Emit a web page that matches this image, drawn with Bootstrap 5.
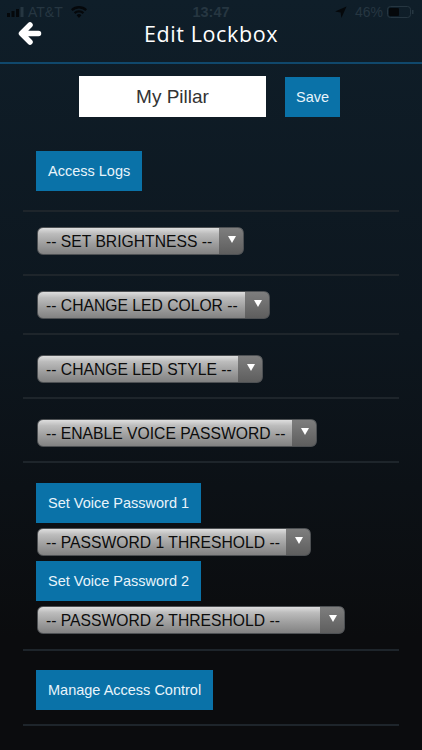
<!DOCTYPE html>
<html lang="en">
<head>
  <meta charset="UTF-8">
  <title>Edit Lockbox</title>
  <link href="https://cdn.jsdelivr.net/npm/bootstrap@5.3.2/dist/css/bootstrap.min.css" rel="stylesheet">
  <style>
    html, body { height: 750px; overflow: hidden; }
    body {
      background: linear-gradient(180deg, #0f1e29 0%, #0d161e 45%, #0b0c0e 85%, #0b0c0e 100%);
      font-family: "Liberation Sans", Arial, sans-serif;
    }
    .status-strip { height: 24px; padding: 0 8px 0 7px; color: #263641; font-size: 14px; line-height: 24px; }
    .status-clock { left: 0; right: 0; top: 0; font-weight: 700; font-size: 14.5px; }
    .title-strip { height: 38px; }
    .title-text { color: #fff; font-family: "Open Sans", sans-serif; font-size: 21.5px; letter-spacing: .6px; line-height: 20px; margin: 0; font-weight: 400; }
    .back-arrow { left: 18px; top: -3px; }
    .title-rule { height: 2px; background: #10486c; }
    .name-row { padding: 12px 0 0 79px; gap: 19px; height: 53px; }
    .name-input {
      width: 187px; height: 41px; border: 0; border-radius: 0; background: #fff; color: #333;
      text-align: center; font-size: 19px; padding: 1px 0 0;
    }
    .blue-btn {
      background: #0a72a8; color: #e8f4fb; border: 0; border-radius: 0; font-size: 14.5px;
      height: 40px; padding: 2px 12px 0; display: block;
    }
    .save-btn { margin-top: 1px; width: 55px; padding: 2px 0 0; }
    .panel-body { padding: 34px 23px 0 23px; }
    .rule-line { height: 2px; background: #1e252b; }
    .sect { padding: 20px 0 14px 13px; }
    .sect-access { padding: 0 0 19px 13px; }
    .sect-bright { padding: 15px 0 19px 13px; }
    .sect-color { padding: 15px 0 14px 13px; }
    .sect-voice { gap: 5px; padding-bottom: 15px; }
    .sect-last { padding-top: 19px; }
    .pick {
      display: block; height: 28px; border-radius: 6px; border: 1px solid #4d5053; padding: 1px 24px 0 8px;
      margin-left: 1px; color: #0c0c0c; font-size: 15.7px; line-height: 26px; appearance: none; -webkit-appearance: none;
      background:
        linear-gradient(180deg, #7e7e7e 0%, #5e5e5e 100%) right top / 24px 100% no-repeat,
        linear-gradient(180deg, #dedede 0%, #bcbcbc 22%, #9e9e9e 60%, #828282 100%);
    }
    .pick-arrow { position: absolute; top: 9px; right: 8px; width: 0; height: 0; border: 4px solid transparent; border-top: 7px solid #fff; border-bottom: 0; }
    .pick-wrap { width: max-content; }
    .w-bright { width: 207px; }
    .w-color { width: 233px; }
    .w-style { width: 226px; }
    .w-voice { width: 280px; }
    .w-pw1 { width: 274px; }
    .w-pw2 { width: 308px; }
  </style>
</head>
<body>
  <div class="status-strip d-flex justify-content-between align-items-center position-relative">
    <div class="d-flex align-items-center gap-1">
      <svg width="17" height="10" viewBox="0 0 17 10"><rect x="0" y="6" width="3" height="4" fill="#05080b"/><rect x="4.5" y="4" width="3" height="6" fill="#05080b"/><rect x="9" y="2" width="3" height="8" fill="#05080b"/><rect x="13.5" y="0" width="3" height="10" fill="#263641"/></svg>
      <span>AT&amp;T</span>
      <svg class="ms-1" width="16" height="12" viewBox="0 0 16 12"><path d="M8 12 5.6 9.2a3.4 3.4 0 0 1 4.8 0zM4.4 8 2.8 6.2a7.6 7.6 0 0 1 10.4 0L11.6 8a5.2 5.2 0 0 0-7.2 0zM1.6 5 0 3.2a11.6 11.6 0 0 1 16 0L14.4 5a9.2 9.2 0 0 0-12.8 0z" fill="#05080b"/></svg>
    </div>
    <div class="status-clock position-absolute text-center">13:47</div>
    <div class="d-flex align-items-center gap-1">
      <svg width="12" height="12" viewBox="0 0 12 12"><path d="M11.5.5 0 5.6l5.6.8.8 5.6z" fill="#05080b"/></svg>
      <span class="ms-1">46%</span>
      <svg width="27" height="12" viewBox="0 0 27 12"><rect x=".5" y=".5" width="23" height="11" rx="3" fill="none" stroke="#263641"/><rect x="2" y="2" width="10" height="8" rx="1" fill="#05080b"/><rect x="25" y="4" width="1.5" height="4" fill="#263641"/></svg>
    </div>
  </div>

  <div class="title-strip position-relative text-center">
    <svg class="back-arrow position-absolute" width="25" height="26" viewBox="0 0 25 26"><path d="M12 4 3.5 12.5l8.500 8.500M5 12.500h15.500" fill="none" stroke="#fff" stroke-width="5.5" stroke-linecap="round" stroke-linejoin="round"/></svg>
    <h1 class="title-text">Edit Lockbox</h1>
  </div>
  <div class="title-rule"></div>

  <div class="name-row d-flex align-items-start">
    <input class="name-input" type="text" value="My Pillar">
    <button class="blue-btn save-btn">Save</button>
  </div>

  <div class="panel-body">
    <div class="sect-access"><button class="blue-btn">Access Logs</button></div>
    <div class="rule-line"></div>

    <div class="sect sect-bright"><div class="pick-wrap position-relative"><select class="pick w-bright"><option>-- SET BRIGHTNESS --</option></select><span class="pick-arrow"></span></div></div>
    <div class="rule-line"></div>

    <div class="sect sect-color"><div class="pick-wrap position-relative"><select class="pick w-color"><option>-- CHANGE LED COLOR --</option></select><span class="pick-arrow"></span></div></div>
    <div class="rule-line"></div>

    <div class="sect"><div class="pick-wrap position-relative"><select class="pick w-style"><option>-- CHANGE LED STYLE --</option></select><span class="pick-arrow"></span></div></div>
    <div class="rule-line"></div>

    <div class="sect"><div class="pick-wrap position-relative"><select class="pick w-voice"><option>-- ENABLE VOICE PASSWORD --</option></select><span class="pick-arrow"></span></div></div>
    <div class="rule-line"></div>

    <div class="sect sect-voice d-flex flex-column">
      <button class="blue-btn align-self-start">Set Voice Password 1</button>
      <div class="pick-wrap position-relative"><select class="pick w-pw1"><option>-- PASSWORD 1 THRESHOLD --</option></select><span class="pick-arrow"></span></div>
      <button class="blue-btn align-self-start">Set Voice Password 2</button>
      <div class="pick-wrap position-relative"><select class="pick w-pw2"><option>-- PASSWORD 2 THRESHOLD --</option></select><span class="pick-arrow"></span></div>
    </div>
    <div class="rule-line"></div>

    <div class="sect sect-last"><button class="blue-btn">Manage Access Control</button></div>
    <div class="rule-line"></div>
  </div>
</body>
</html>
